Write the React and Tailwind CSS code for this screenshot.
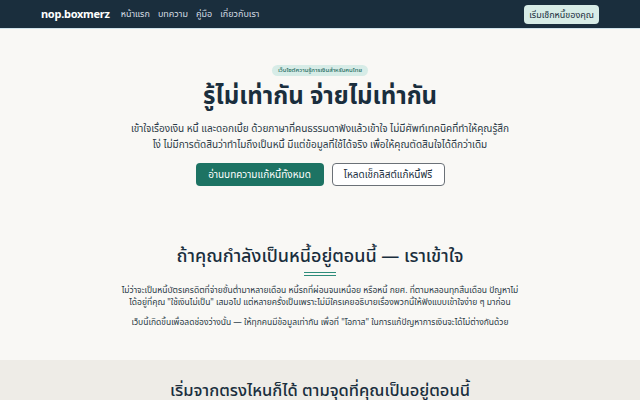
const font = { fontFamily: '"Noto Sans", "Noto Sans Thai", sans-serif' };

function Header() {
  return (
    <header className="bg-[#1a2e3d] border-b border-[#cfe3ec]">
      <div className="h-[28px] px-[41px] flex items-center justify-between">
        <div className="flex items-center gap-[11px]">
          <span className="text-white font-bold text-[11px] tracking-tight">nop.boxmerz</span>
          <nav className="flex items-center gap-[8px] text-[9px] text-[#d5dde3]">
            <a>หน้าแรก</a>
            <a>บทความ</a>
            <a>คู่มือ</a>
            <a>เกี่ยวกับเรา</a>
          </nav>
        </div>
        <button className="h-[19px] px-[5px] rounded-[4px] bg-[#d7ece7] text-[#1a2e3d] text-[9px] leading-none">
          เริ่มเช็กหนี้ของคุณ
        </button>
      </div>
    </header>
  );
}

function Hero() {
  return (
    <section className="pt-[36px] pb-[30px] flex flex-col items-center text-center">
      <span className="px-[6px] h-[11px] flex items-center rounded-full bg-[#d7ece7] text-[#1e6b5e] text-[6px] font-medium">
        เว็บไซต์ความรู้การเงินสำหรับคนไทย
      </span>
      <h1 className="mt-[2px] text-[24px] font-bold text-[#1a2e3d] leading-[34px]">
        รู้ไม่เท่ากัน จ่ายไม่เท่ากัน
      </h1>
      <p className="mt-[8px] text-[10px] leading-[16px] text-[#2b3a46] max-w-[384px]">
        เข้าใจเรื่องเงิน หนี้ และดอกเบี้ย ด้วยภาษาที่คนธรรมดาฟังแล้วเข้าใจ ไม่มีศัพท์เทคนิคที่ทำให้คุณรู้สึกโง่ ไม่มีการตัดสินว่าทำไมถึงเป็นหนี้ มีแต่ข้อมูลที่ใช้ได้จริง เพื่อให้คุณตัดสินใจได้ดีกว่าเดิม
      </p>
      <div className="mt-[11px] flex gap-[8px]">
        <button className="h-[23px] w-[128px] rounded-[4px] bg-[#1d7363] text-white text-[10px]">
          อ่านบทความแก้หนี้ทั้งหมด
        </button>
        <button className="h-[23px] w-[113px] rounded-[4px] bg-white border border-[#6b7177] text-[#1a2e3d] text-[10px]">
          โหลดเช็กลิสต์แก้หนี้ฟรี
        </button>
      </div>
    </section>
  );
}

function Empathy() {
  return (
    <section className="pt-[25px] pb-[32px] flex flex-col items-center text-center">
      <h2 className="text-[18px] font-medium text-[#1a2e3d] leading-[28px]">
        ถ้าคุณกำลังเป็นหนี้อยู่ตอนนี้ — เราเข้าใจ
      </h2>
      <div className="mt-[3px] w-[32px] h-[4px] border-t-[1.5px] border-b-[1.5px] border-[#2d8c7a]" />
      <p className="mt-[8px] max-w-[404px] text-[8.5px] leading-[12px] text-[#2b3a46]">
        ไม่ว่าจะเป็นหนี้บัตรเครดิตที่จ่ายขั้นต่ำมาหลายเดือน หนี้รถที่ผ่อนจนเหนื่อย หรือหนี้ กยศ. ที่ตามหลอนทุกสิ้นเดือน ปัญหาไม่ได้อยู่ที่คุณ "ใช้เงินไม่เป็น" เสมอไป แต่หลายครั้งเป็นเพราะไม่มีใครเคยอธิบายเรื่องพวกนี้ให้ฟังแบบเข้าใจง่าย ๆ มาก่อน
      </p>
      <p className="mt-[8px] max-w-[404px] text-[8.5px] leading-[12px] text-[#2b3a46]">
        เว็บนี้เกิดขึ้นเพื่อลดช่องว่างนั้น — ให้ทุกคนมีข้อมูลเท่ากัน เพื่อที่ "โอกาส" ในการแก้ปัญหาการเงินจะได้ไม่ต่างกันด้วย
      </p>
    </section>
  );
}

function StartHere() {
  return (
    <section className="bg-[#eeece7] pt-[16px] pb-[40px] flex flex-col items-center text-center">
      <h2 className="text-[16.5px] font-medium text-[#1a2e3d] leading-[28px]">
        เริ่มจากตรงไหนก็ได้ ตามจุดที่คุณเป็นอยู่ตอนนี้
      </h2>
    </section>
  );
}

export default function App() {
  return (
    <div style={font} className="w-[640px] min-h-[400px] bg-[#f9f8f5]">
      <Header />
      <Hero />
      <Empathy />
      <StartHere />
    </div>
  );
}
